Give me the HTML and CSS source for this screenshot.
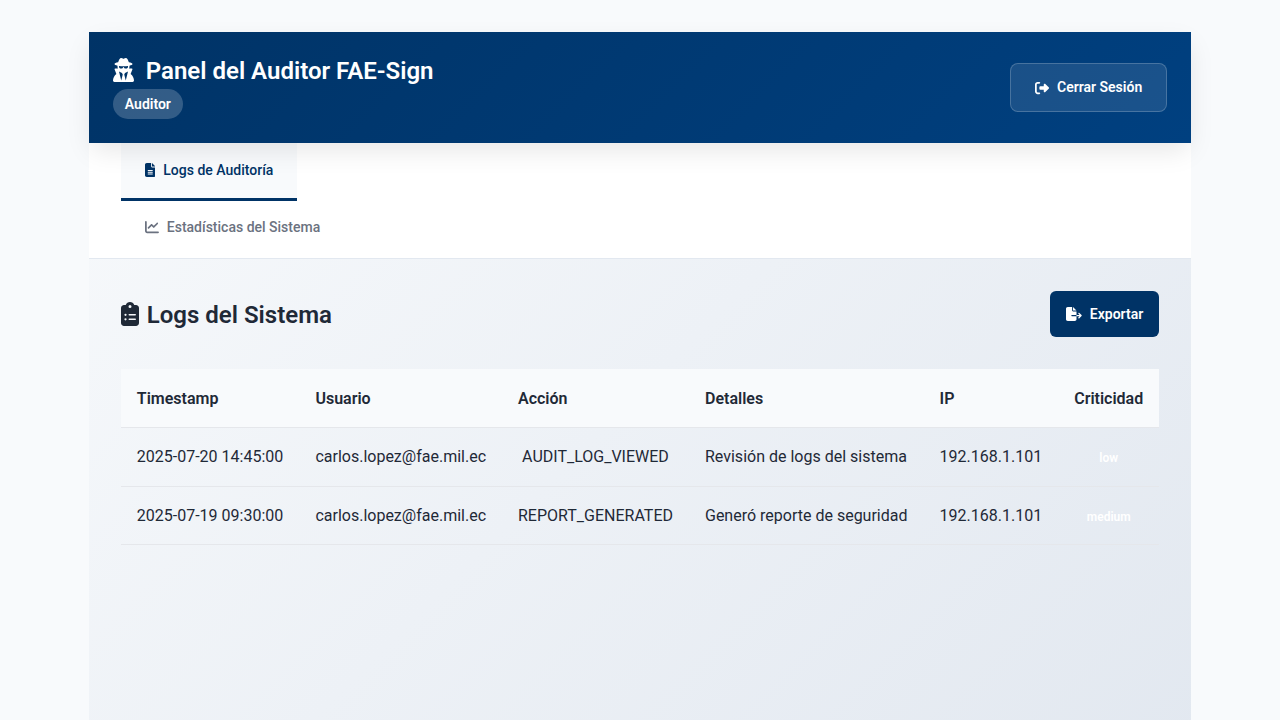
FILE: index.html
```html
<!DOCTYPE html>
<html lang="es">
<head>
<meta charset="utf-8">
<title>Panel del Auditor FAE-Sign</title>
<link rel="stylesheet" href="styles.css">
</head>
<body>
<div class="panel">
  <header class="header">
    <div class="brand">
      <h1 class="brand-title">
        <svg class="icon brand-icon" viewBox="0 0 448 512"><path d="M224 16c-6.7 0-10.8-2.8-15.5-6.1C201.9 5.4 194 0 176 0c-30.5 0-52 43.7-66 89.4C62.7 98.1 32 112.2 32 128c0 14.3 25 27.1 64.6 35.9c-.4 4-.6 8-.6 12.1c0 17 3.3 33.2 9.3 48l-59.9 0C38 224 32 230 32 237.4c0 1.7 .3 3.4 1 5l38.8 96.9C28.2 371.8 0 423.8 0 482.3C0 498.7 13.3 512 29.7 512l388.6 0c16.4 0 29.7-13.3 29.7-29.7c0-58.5-28.2-110.4-71.7-143L415 242.4c.6-1.6 1-3.3 1-5c0-7.4-6-13.4-13.4-13.4l-59.9 0c6-14.8 9.3-31 9.3-48c0-4.1-.2-8.1-.6-12.1C391 155.1 416 142.3 416 128c0-15.8-30.7-29.9-78-38.6C324 43.7 302.5 0 272 0c-18 0-25.9 5.4-32.5 9.9c-4.8 3.3-8.8 6.1-15.5 6.1zm56 208l-12.4 0c-16.5 0-31.1-10.6-36.3-26.2c-2.3-7-12.2-7-14.5 0c-5.2 15.6-19.9 26.2-36.3 26.2L168 224c-22.1 0-40-17.9-40-40l0-14.4c28.2 4.1 61 6.4 96 6.4s67.8-2.3 96-6.4l0 14.4c0 22.1-17.9 40-40 40zm-88 96l16 32L176 480 128 288l64 32zm128-32L272 480 240 352l16-32 64-32z"/></svg>
        <span>Panel del Auditor FAE-Sign</span>
      </h1>
      <span class="role">Auditor</span>
    </div>
    <button class="logout">
      <svg class="icon" viewBox="0 0 512 512"><path d="M377.9 105.9L500.7 228.7c7.2 7.2 11.3 17.1 11.3 27.3s-4.1 20.1-11.3 27.3L377.9 406.1c-6.4 6.4-15 9.9-24 9.9c-18.7 0-33.9-15.2-33.9-33.9l0-62.1-128 0c-17.7 0-32-14.3-32-32l0-64c0-17.7 14.3-32 32-32l128 0 0-62.1c0-18.7 15.2-33.9 33.9-33.9c9 0 17.6 3.6 24 9.9zM160 96L96 96c-17.7 0-32 14.3-32 32l0 256c0 17.7 14.3 32 32 32l64 0c17.7 0 32 14.3 32 32s-14.3 32-32 32l-64 0c-53 0-96-43-96-96L0 128C0 75 43 32 96 32l64 0c17.7 0 32 14.3 32 32s-14.3 32-32 32z"/></svg>
      <span>Cerrar Sesión</span>
    </button>
  </header>

  <nav class="tabs">
    <button class="tab tab-active">
      <svg class="icon" viewBox="0 0 384 512"><path d="M64 0C28.7 0 0 28.7 0 64L0 448c0 35.3 28.7 64 64 64l256 0c35.3 0 64-28.7 64-64l0-288-128 0c-17.7 0-32-14.3-32-32L224 0 64 0zM256 0l0 128 128 0L256 0zM112 256l160 0c8.8 0 16 7.2 16 16s-7.2 16-16 16l-160 0c-8.8 0-16-7.2-16-16s7.2-16 16-16zm0 64l160 0c8.8 0 16 7.2 16 16s-7.2 16-16 16l-160 0c-8.8 0-16-7.2-16-16s7.2-16 16-16zm0 64l160 0c8.8 0 16 7.2 16 16s-7.2 16-16 16l-160 0c-8.8 0-16-7.2-16-16s7.2-16 16-16z"/></svg>
      <span>Logs de Auditoría</span>
    </button>
    <button class="tab">
      <svg class="icon" viewBox="0 0 512 512"><path d="M64 64c0-17.7-14.3-32-32-32S0 46.3 0 64L0 400c0 44.2 35.8 80 80 80l400 0c17.7 0 32-14.3 32-32s-14.3-32-32-32L80 416c-8.8 0-16-7.2-16-16L64 64zm406.6 86.6c12.5-12.5 12.5-32.8 0-45.3s-32.8-12.5-45.3 0L320 210.7l-57.4-57.4c-12.5-12.5-32.8-12.5-45.3 0l-112 112c-12.5 12.5-12.5 32.8 0 45.3s32.8 12.5 45.3 0L240 221.3l57.4 57.4c12.5 12.5 32.8 12.5 45.3 0l128-128z"/></svg>
      <span>Estadísticas del Sistema</span>
    </button>
  </nav>

  <main class="content">
    <div class="section-head">
      <h2 class="section-title">
        <svg class="icon" viewBox="0 0 384 512"><path d="M192 0c-41.8 0-77.4 26.7-90.5 64L64 64C28.7 64 0 92.7 0 128L0 448c0 35.3 28.7 64 64 64l256 0c35.3 0 64-28.7 64-64l0-320c0-35.3-28.7-64-64-64l-37.5 0C269.4 26.7 233.8 0 192 0zm0 64a32 32 0 1 1 0 64 32 32 0 1 1 0-64zM72 272a24 24 0 1 1 48 0 24 24 0 1 1 -48 0zm104-16l128 0c8.8 0 16 7.2 16 16s-7.2 16-16 16l-128 0c-8.8 0-16-7.2-16-16s7.2-16 16-16zM72 368a24 24 0 1 1 48 0 24 24 0 1 1 -48 0zm88 0c0-8.8 7.2-16 16-16l128 0c8.8 0 16 7.2 16 16s-7.2 16-16 16l-128 0c-8.8 0-16-7.2-16-16z"/></svg>
        <span class="section-label">Logs del Sistema</span>
      </h2>
      <button class="export">
        <svg class="icon" viewBox="0 0 576 512"><path d="M0 64C0 28.7 28.7 0 64 0L224 0l0 128c0 17.7 14.3 32 32 32l128 0 0 128-168 0c-13.3 0-24 10.7-24 24s10.7 24 24 24l168 0 0 112c0 35.3-28.7 64-64 64L64 512c-35.3 0-64-28.7-64-64L0 64zM384 336l0-48 110.1 0-39-39c-9.4-9.4-9.4-24.6 0-33.9s24.6-9.4 33.9 0l80 80c9.4 9.4 9.4 24.6 0 33.9l-80 80c-9.4 9.4-24.6 9.4-33.9 0s-9.4-24.6 0-33.9l39-39L384 336zm0-208l-128 0L256 0 384 128z"/></svg>
        <span>Exportar</span>
      </button>
    </div>

    <table class="logs">
      <colgroup><col class="c-time"><col class="c-user"><col class="c-action"><col class="c-detail"><col class="c-ip"><col class="c-level"></colgroup>
      <thead>
        <tr><th>Timestamp</th><th>Usuario</th><th>Acción</th><th>Detalles</th><th>IP</th><th>Criticidad</th></tr>
      </thead>
      <tbody>
        <tr><td>2025-07-20 14:45:00</td><td>carlos.lopez@fae.mil.ec</td><td class="center">AUDIT_LOG_VIEWED</td><td>Revisión de logs del sistema</td><td>192.168.1.101</td><td class="center"><span class="level">low</span></td></tr>
        <tr><td>2025-07-19 09:30:00</td><td>carlos.lopez@fae.mil.ec</td><td class="center">REPORT_GENERATED</td><td>Generó reporte de seguridad</td><td>192.168.1.101</td><td class="center"><span class="level">medium</span></td></tr>
      </tbody>
    </table>
  </main>
</div>
</body>
</html>
```

FILE: styles.css
```css
* { box-sizing: border-box; margin: 0; padding: 0; }

html { overflow: hidden; }

body {
  padding: 32px 88.8px 0;
  background: #f8fafc;
  color: #1f2937;
  font-family: Roboto, "Liberation Sans", sans-serif;
  font-size: 16px;
  line-height: 1.6;
  height: 720px;
  overflow: hidden;
}

button { font: inherit; border: 0; background: none; color: inherit; }

.icon { height: 1em; width: auto; fill: currentColor; flex: none; display: block; }

.panel {
  display: flex;
  flex-direction: column;
  height: 720px;
  background: linear-gradient(135deg, #f8fafc 0%, #e2e8f0 100%);
}

.header {
  position: relative;
  z-index: 1;
  display: flex;
  align-items: center;
  justify-content: space-between;
  height: 111.2px;
  padding: 0 24px;
  background: linear-gradient(135deg, #003366 0%, #004080 100%);
  color: #fff;
  box-shadow: 0 10px 25px -3px rgba(0, 0, 0, 0.1);
}

.brand { display: flex; flex-direction: column; align-items: flex-start; }

.brand-title {
  display: flex;
  align-items: center;
  gap: 12px;
  margin-bottom: 2px;
  font-size: 24px;
  font-weight: 600;
  line-height: 31px;
}

.brand-icon { margin-bottom: 2px; }

.role {
  padding: 4px 12px;
  border-radius: 20px;
  background: rgba(255, 255, 255, 0.2);
  font-size: 14px;
  font-weight: 600;
}

.logout {
  display: flex;
  align-items: center;
  gap: 8px;
  padding: 12px 24px;
  border: 1px solid rgba(255, 255, 255, 0.2);
  border-radius: 8px;
  background: rgba(255, 255, 255, 0.1);
  font-size: 14px;
  font-weight: 600;
}

.tabs {
  display: flex;
  flex-direction: column;
  align-items: flex-start;
  padding: 0 32px;
  background: #fff;
  border-bottom: 1px solid #e2e8f0;
}

.tab {
  display: flex;
  align-items: center;
  gap: 8px;
  padding: 15.7px 24px 16.3px;
  border-bottom: 3px solid transparent;
  color: #6b7280;
  font-size: 14px;
  font-weight: 500;
}

.tab-active { background: #f8fafc; border-bottom-color: #003366; color: #003366; }

.content { padding: 32px; }

.section-head {
  display: flex;
  align-items: center;
  justify-content: space-between;
  margin-bottom: 32px;
}

.section-title { display: flex; align-items: center; gap: 8px; font-size: 24px; font-weight: 600; line-height: 38px; }

.section-label { padding-top: 1px; }

.export {
  display: flex;
  align-items: center;
  gap: 8px;
  padding: 12px 16px;
  border-radius: 6px;
  background: #003366;
  color: #fff;
  font-size: 14px;
  font-weight: 600;
}

.logs { width: 100%; table-layout: fixed; border-collapse: collapse; }

.logs th,
.logs td { padding: 16px; border-bottom: 1px solid #e5e7eb; text-align: left; white-space: nowrap; }

.logs th { padding: 16.6px 16px 15.4px; background: #f8fafc; font-weight: 600; }

.logs .center { text-align: center; }

.c-time { width: 178.6px; }
.c-user { width: 202.6px; }
.c-action { width: 187px; }
.c-detail { width: 234.6px; }
.c-ip { width: 134.6px; }

.level { color: #fff; font-size: 12px; font-weight: 600; }
```
